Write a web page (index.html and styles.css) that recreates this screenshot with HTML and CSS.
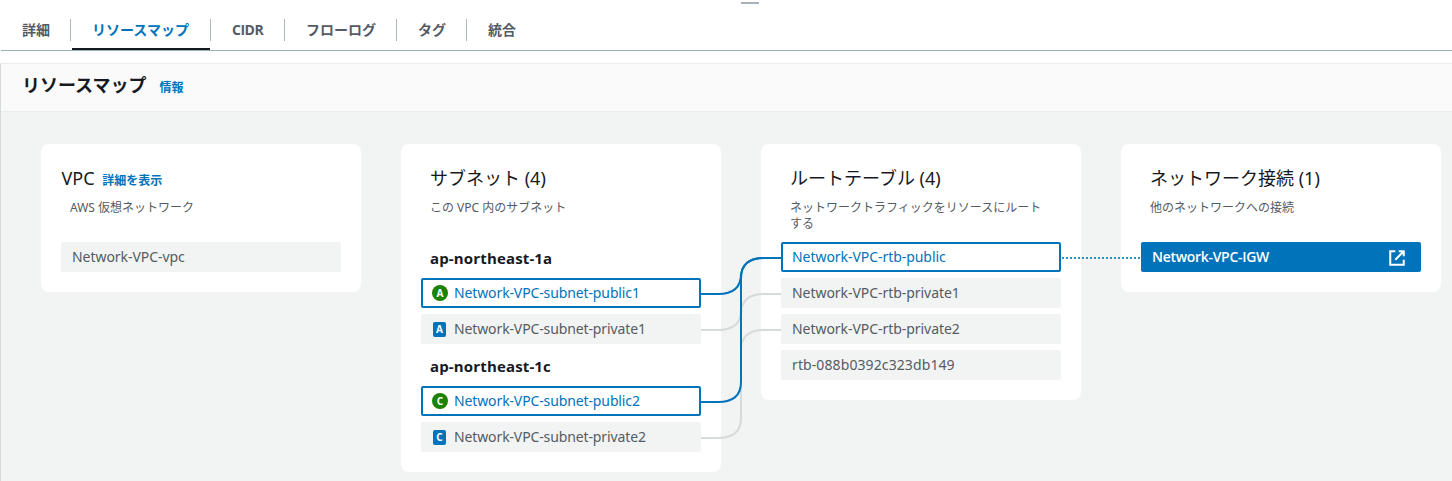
FILE: index.html
```html
<!DOCTYPE html>
<html lang="ja">
<head>
<meta charset="utf-8">
<title>リソースマップ</title>
<link rel="stylesheet" href="styles.css">
</head>
<body>
<div class="grip-bar"><span class="grip"></span></div>
<nav class="tabs">
  <a class="tab"><span class="t-2">詳細</span></a>
  <a class="tab active"><span class="t-7">リソースマップ</span></a>
  <a class="tab"><span class="t-cidr">CIDR</span></a>
  <a class="tab"><span class="t-5">フローログ</span></a>
  <a class="tab"><span class="t-2">タグ</span></a>
  <a class="tab"><span class="t-2">統合</span></a>
</nav>
<section class="panel">
  <header class="panel-head">
    <h2>リソースマップ</h2>
    <a class="info">情報</a>
  </header>
  <div class="map">
    <article class="card">
      <div class="head vpc-head">
        <h3>VPC <a class="more">詳細を表示</a></h3>
        <p>AWS 仮想ネットワーク</p>
      </div>
      <div class="row">Network-VPC-vpc</div>
    </article>
    <article class="card subnets">
      <div class="head">
        <h3>サブネット (4)</h3>
        <p>この VPC 内のサブネット</p>
      </div>
      <h4>ap-northeast-1a</h4>
      <div class="rows">
        <div class="row on"><span class="badge public">A</span>Network-VPC-subnet-public1</div>
        <div class="row"><span class="badge private">A</span>Network-VPC-subnet-private1</div>
      </div>
      <h4 class="next">ap-northeast-1c</h4>
      <div class="rows">
        <div class="row on"><span class="badge public">C</span>Network-VPC-subnet-public2</div>
        <div class="row"><span class="badge private">C</span>Network-VPC-subnet-private2</div>
      </div>
    </article>
    <article class="card">
      <div class="head">
        <h3>ルートテーブル (4)</h3>
        <p>ネットワークトラフィックをリソースにルートする</p>
      </div>
      <div class="rows">
        <div class="row on">Network-VPC-rtb-public</div>
        <div class="row">Network-VPC-rtb-private1</div>
        <div class="row">Network-VPC-rtb-private2</div>
        <div class="row id">rtb-088b0392c323db149</div>
      </div>
    </article>
    <article class="card">
      <div class="head">
        <h3>ネットワーク接続 (1)</h3>
        <p>他のネットワークへの接続</p>
      </div>
      <div class="row solid"><span>Network-VPC-IGW</span>
        <svg class="ext" viewBox="0 0 16 16"><path d="M6.5 2H2v12h12V9.5M9.5 2H14v4.5M14 2L6.5 9.5"/></svg>
      </div>
    </article>
    <svg class="links" viewBox="0 112 1452 369">
      <g class="idle">
        <path d="M701 330H718Q741 330 741 310V314Q741 294 764 294H781"/>
        <path d="M701 438H718Q741 438 741 418V350Q741 330 764 330H781"/>
      </g>
      <g class="live">
        <path d="M701 294H718Q741 294 741 274V278Q741 258 764 258H781"/>
        <path d="M701 402H718Q741 402 741 382V278Q741 258 764 258H781"/>
      </g>
      <path class="dots" d="M1062 258H1141"/>
    </svg>
  </div>
</section>
</body>
</html>
```
FILE: styles.css
```css
* { box-sizing: border-box; }
body {
  margin: 0;
  height: 481px;
  overflow: hidden;
  background: #fff;
  color: #16191f;
  font: 14px/22px "Noto Sans", "Noto Sans CJK JP", sans-serif;
}
h2, h3, h4, p { margin: 0; }
.grip-bar { height: 10px; display: flex; justify-content: center; padding: 2px 0 0 47px; }
.grip { width: 18px; height: 2px; background: #aab0b7; }

.tabs { display: flex; height: 41px; margin-left: 1px; border-bottom: 1px solid #9bb0b5; }
.tab {
  position: relative;
  height: 41px;
  padding: 9px 21px 0;
  color: #545b64;
  font-family: "Open Sans", "Noto Sans CJK JP", sans-serif;
  font-weight: 600;
  white-space: nowrap;
}
.tab + .tab::before {
  content: "";
  position: absolute;
  left: -1px;
  top: 9px;
  width: 1px;
  height: 22px;
  background: #aab7b8;
}
.tab span { display: block; }
.t-2 { width: 28px; }
.t-7 { width: 98px; }
.t-cidr { width: 32px; font-weight: 700; letter-spacing: -0.5px; }
.t-5 { width: 70px; }
.tab.active { color: #0073bb; }
.tab.active::after {
  content: "";
  position: absolute;
  left: 1px;
  right: 1px;
  bottom: 1px;
  height: 2px;
  background: #16191f;
}

.panel { margin-top: 12px; border-top: 1px solid #eaeded; border-left: 1px solid #d5dbdb; }
.panel-head {
  display: flex;
  align-items: baseline;
  gap: 13px;
  height: 48px;
  padding: 10px 21px 0;
  background: #fafafa;
  border-bottom: 1px solid #eaeded;
}
.panel-head h2 { font-size: 18px; line-height: 22px; }
.info { color: #0073bb; font-size: 12px; font-weight: 600; }
.map {
  position: relative;
  display: flex;
  align-items: flex-start;
  gap: 40px;
  height: 369px;
  padding: 32px 0 0 40px;
  background: #f2f3f3;
}
.card { flex: none; width: 320px; padding: 0 20px 20px; border-radius: 8px; background: #fff; }
.head { height: 98px; padding: 22px 9px 0; }
.head h3 { height: 24px; font-size: 18px; font-weight: 400; line-height: 25px; white-space: nowrap; }
.head p { width: 256px; margin-top: 10px; color: #545b64; font-size: 12px; line-height: 16px; }
.vpc-head h3 { margin-left: -8.5px; }
.more { margin-left: 3px; color: #0073bb; font-size: 12px; font-weight: 600; line-height: 12px; }
.card h4 { height: 36px; padding-left: 9px; font-size: 15px; line-height: 32px; letter-spacing: 0.15px; font-family: "Open Sans", sans-serif; }
.card h4.next { margin-top: 6px; }
.rows { display: grid; gap: 6px; }
.row {
  display: flex;
  align-items: center;
  height: 30px;
  padding: 0 11px;
  border-radius: 2px;
  background: #f2f3f3;
  color: #545b64;
  letter-spacing: -0.05px;
  white-space: nowrap;
}
.subnets .row { letter-spacing: -0.12px; }
.row.id { letter-spacing: 0.1px; }
.row.on { padding: 0 9px; border: 2px solid #0073bb; background: #fff; color: #0073bb; }
.row.solid {
  justify-content: space-between;
  padding-right: 15px;
  background: #0073bb;
  color: #fff;
  font-family: "Open Sans", sans-serif;
  font-weight: 600;
  letter-spacing: -0.3px;
}
.ext { width: 18px; height: 18px; margin-top: 1px; fill: none; stroke: #fff; stroke-width: 1.8; }
.badge {
  display: flex;
  align-items: center;
  justify-content: center;
  margin-right: 6px;
  color: #fff;
  font-size: 10px;
  line-height: 14px;
  font-weight: 700;
}
.public { width: 16px; height: 16px; border-radius: 50%; background: #1d8102; }
.private { width: 13px; height: 15px; margin: 0 8px 0 1px; border-radius: 2px; background: #0073bb; }
.links { position: absolute; left: -1px; top: 0; width: 1452px; height: 369px; fill: none; stroke-width: 2; pointer-events: none; }
.idle { stroke: #d5dbdb; }
.live { stroke: #0073bb; }
.dots { stroke: #0073bb; stroke-opacity: 0.8; stroke-dasharray: 2 2; }
```
